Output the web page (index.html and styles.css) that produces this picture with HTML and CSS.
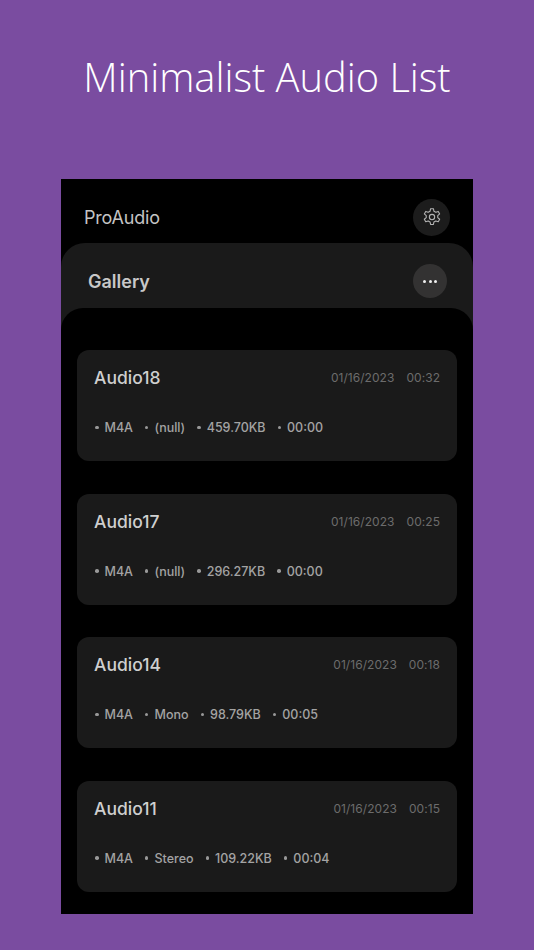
FILE: index.html
```html
<!DOCTYPE html>
<html lang="en">
<head>
    <meta charset="UTF-8">
    <title>Minimalist Audio List</title>
    <link rel="stylesheet" href="styles.css">
</head>
<body>
    <h1 class="page-title">Minimalist Audio List</h1>
    <div class="phone">
        <div class="app-header">
            <span class="app-name">ProAudio</span>
            <button class="settings-btn" aria-label="Settings">
                <svg width="20" height="20" viewBox="0 0 24 24" fill="none" stroke="#b4b4b4" stroke-width="1.300" stroke-linejoin="round">
                    <path d="M10.3 2h3.4l.6 3 2.3 1.3 2.9-1 1.7 3-2.3 2v2.4l2.3 2-1.700 3-2.900-1-2.300 1.300-.6 3h-3.400l-.6-3-2.300-1.300-2.900 1-1.700-3 2.300-2v-2.400l-2.300-2 1.700-3 2.900 1L9.700 5z"/>
                    <circle cx="12" cy="12" r="3.200"/>
                </svg>
            </button>
        </div>
        <div class="gallery">
            <div class="gallery-header">
                <span class="gallery-title">Gallery</span>
                <button class="more-btn" aria-label="More">
                    <span class="more-dot"></span>
                    <span class="more-dot"></span>
                    <span class="more-dot"></span>
                </button>
            </div>
            <div class="audio-list">
                <div class="audio-card">
                    <div class="card-top">
                        <span class="audio-name">Audio18</span>
                        <span class="audio-date"><span>01/16/2023</span><span>00:32</span></span>
                    </div>
                    <ul class="audio-meta">
                        <li>M4A</li>
                        <li>(null)</li>
                        <li>459.70KB</li>
                        <li>00:00</li>
                    </ul>
                </div>
                <div class="audio-card">
                    <div class="card-top">
                        <span class="audio-name">Audio17</span>
                        <span class="audio-date"><span>01/16/2023</span><span>00:25</span></span>
                    </div>
                    <ul class="audio-meta">
                        <li>M4A</li>
                        <li>(null)</li>
                        <li>296.27KB</li>
                        <li>00:00</li>
                    </ul>
                </div>
                <div class="audio-card">
                    <div class="card-top">
                        <span class="audio-name">Audio14</span>
                        <span class="audio-date"><span>01/16/2023</span><span>00:18</span></span>
                    </div>
                    <ul class="audio-meta">
                        <li>M4A</li>
                        <li>Mono</li>
                        <li>98.79KB</li>
                        <li>00:05</li>
                    </ul>
                </div>
                <div class="audio-card">
                    <div class="card-top">
                        <span class="audio-name">Audio11</span>
                        <span class="audio-date"><span>01/16/2023</span><span>00:15</span></span>
                    </div>
                    <ul class="audio-meta">
                        <li>M4A</li>
                        <li>Stereo</li>
                        <li>109.22KB</li>
                        <li>00:04</li>
                    </ul>
                </div>
            </div>
        </div>
    </div>
</body>
</html>
```

FILE: styles.css
```css
body {
    background: #7a4ca0;
    margin: 0;
    height: 950px;
    overflow: hidden;
    font-family: 'Inter', 'Liberation Sans', sans-serif;
    display: flex;
    flex-direction: column;
    align-items: center;
}
.page-title {
    margin: 0;
    padding-top: 52px;
    height: 179px;
    flex-shrink: 0;
    box-sizing: border-box;
    color: #fff;
    font-family: 'Open Sans', sans-serif;
    font-size: 39.8px;
    line-height: 50px;
    font-weight: 350;
    white-space: nowrap;
}
.phone {
    width: 412px;
    height: 735px;
    flex-shrink: 0;
    background: #000;
    overflow: hidden;
}
.app-header {
    height: 64px;
    box-sizing: border-box;
    padding: 12px 23px 0 23px;
    display: flex;
    align-items: center;
    justify-content: space-between;
}
.app-name {
    color: #c4c4c4;
    font-size: 18px;
    font-weight: 400;
    letter-spacing: -0.2px;
}
.settings-btn {
    width: 37px;
    height: 37px;
    border: none;
    border-radius: 50%;
    background: #1c1c1c;
    padding: 0;
    display: flex;
    align-items: center;
    justify-content: center;
}
.gallery {
    background: #1a1a1a;
    border-radius: 24px 24px 0 0;
}
.gallery-header {
    height: 65px;
    box-sizing: border-box;
    padding: 11px 26px 0 27px;
    display: flex;
    align-items: center;
    justify-content: space-between;
}
.gallery-title {
    color: #c8c8c8;
    font-size: 18px;
    font-weight: 600;
}
.more-btn {
    width: 34px;
    height: 34px;
    border: none;
    border-radius: 50%;
    background: #333232;
    padding: 0;
    display: flex;
    align-items: center;
    justify-content: center;
    gap: 2.5px;
}
.more-dot {
    width: 3px;
    height: 3px;
    border-radius: 50%;
    background: #f0f0f0;
}
.audio-list {
    background: #000;
    border-radius: 22px 22px 0 0;
    padding: 42px 16px 0 16px;
    height: 564px;
    display: flex;
    flex-direction: column;
    gap: 32.5px;
}
.audio-card {
    height: 111px;
    flex-shrink: 0;
    background: #1a1a1a;
    border-radius: 12px;
    padding: 0 17px;
    box-sizing: border-box;
}
.card-top {
    height: 55px;
    display: flex;
    align-items: center;
    justify-content: space-between;
}
.audio-name {
    color: #cfcfcf;
    font-size: 17.5px;
    font-weight: 500;
}
.audio-date {
    display: flex;
    gap: 12px;
    color: #6c6c6c;
    font-size: 12px;
    letter-spacing: 0.05px;
}
.audio-meta {
    list-style: none;
    margin: 0;
    padding: 0 0 0 1px;
    height: 45px;
    display: flex;
    align-items: center;
    gap: 12px;
    color: #a3a3a3;
    font-size: 12.5px;
    font-weight: 500;
}
.audio-meta li {
    display: flex;
    align-items: center;
    gap: 6px;
}
.audio-meta li::before {
    content: '';
    width: 3.5px;
    height: 3.5px;
    border-radius: 50%;
    background: #999;
}
```
